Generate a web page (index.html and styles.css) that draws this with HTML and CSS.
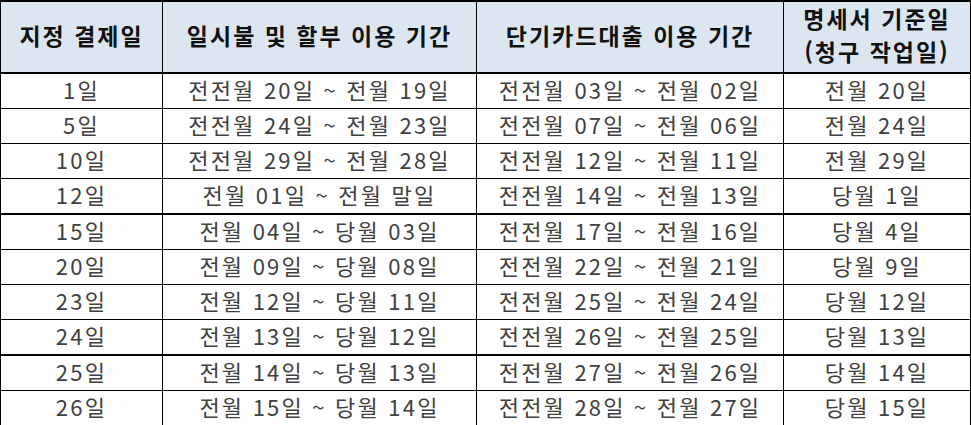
FILE: index.html
```html
<!DOCTYPE html>
<html lang="ko">
<head>
<meta charset="utf-8">
<link rel="stylesheet" href="styles.css">
</head>
<body>
<table class="sched">
  <colgroup>
    <col class="c1"><col class="c2"><col class="c3"><col class="c4">
  </colgroup>
  <thead>
    <tr>
      <th>지정 결제일</th>
      <th>일시불 및 할부 이용 기간</th>
      <th>단기카드대출 이용 기간</th>
      <th>명세서 기준일<br>(청구 작업일)</th>
    </tr>
  </thead>
  <tbody>
    <tr><td>1일</td><td>전전월 20일 ~ 전월 19일</td><td>전전월 03일 ~ 전월 02일</td><td>전월 20일</td></tr>
    <tr><td>5일</td><td>전전월 24일 ~ 전월 23일</td><td>전전월 07일 ~ 전월 06일</td><td>전월 24일</td></tr>
    <tr><td>10일</td><td>전전월 29일 ~ 전월 28일</td><td>전전월 12일 ~ 전월 11일</td><td>전월 29일</td></tr>
    <tr><td>12일</td><td>전월 01일 ~ 전월 말일</td><td>전전월 14일 ~ 전월 13일</td><td>당월 1일</td></tr>
    <tr class="thick"><td>15일</td><td>전월 04일 ~ 당월 03일</td><td>전전월 17일 ~ 전월 16일</td><td>당월 4일</td></tr>
    <tr><td>20일</td><td>전월 09일 ~ 당월 08일</td><td>전전월 22일 ~ 전월 21일</td><td>당월 9일</td></tr>
    <tr><td>23일</td><td>전월 12일 ~ 당월 11일</td><td>전전월 25일 ~ 전월 24일</td><td>당월 12일</td></tr>
    <tr><td>24일</td><td>전월 13일 ~ 당월 12일</td><td>전전월 26일 ~ 전월 25일</td><td>당월 13일</td></tr>
    <tr class="thick"><td>25일</td><td>전월 14일 ~ 당월 13일</td><td>전전월 27일 ~ 전월 26일</td><td>당월 14일</td></tr>
    <tr><td>26일</td><td>전월 15일 ~ 당월 14일</td><td>전전월 28일 ~ 전월 27일</td><td>당월 15일</td></tr>
  </tbody>
</table>
</body>
</html>
```
FILE: styles.css
```css
html, body {
  margin: 0;
  padding: 0;
  background: #ffffff;
}
.sched {
  border-collapse: collapse;
  table-layout: fixed;
  width: 970px;
  font-family: "Noto Sans CJK KR", "Noto Sans", sans-serif;
}
.c1 { width: 162px; }
.c2 { width: 314px; }
.c3 { width: 307px; }
.c4 { width: 187px; }
.sched th, .sched td {
  border: 1px solid #000;
  text-align: center;
  padding: 0;
  white-space: nowrap;
}
.sched th {
  background: #dce6f1;
  color: #111;
  font-weight: 700;
  font-size: 23px;
  letter-spacing: 2px;
  height: 66px;
  line-height: 33px;
  padding-bottom: 4px;
  border-bottom: 2px solid #000;
  border-top: 2px solid #000;
}
.sched td {
  color: #404040;
  font-size: 22px;
  letter-spacing: 2.2px;
  height: 30px;
  line-height: 30px;
  padding-bottom: 4px;
}
.sched tr.thick td {
  border-top: 2px solid #000;
}
```
